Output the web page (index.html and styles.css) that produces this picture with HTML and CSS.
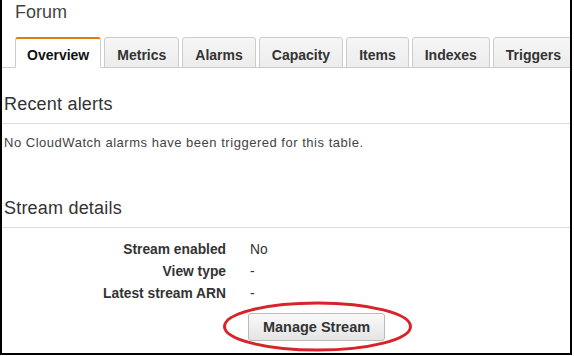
FILE: index.html
```html
<!DOCTYPE html>
<html lang="en">
<head>
    <meta charset="UTF-8">
    <meta name="viewport" content="width=device-width, initial-scale=1.0">
    <title>Forum</title>
    <link rel="stylesheet" href="styles.css">
</head>
<body>
    <div class="panel">
        <div class="table-name">Forum</div>
        <div class="tabs">
            <div class="tab active">Overview</div>
            <div class="tab">Metrics</div>
            <div class="tab">Alarms</div>
            <div class="tab">Capacity</div>
            <div class="tab">Items</div>
            <div class="tab">Indexes</div>
            <div class="tab">Triggers</div>
        </div>

        <div class="section-title">Recent alerts</div>
        <div class="message">No CloudWatch alarms have been triggered for this table.</div>

        <div class="section-title stream">Stream details</div>
        <div class="details">
            <div class="label">Stream enabled</div>
            <div class="value">No</div>
            <div class="label">View type</div>
            <div class="value">-</div>
            <div class="label">Latest stream ARN</div>
            <div class="value">-</div>
        </div>
        <div class="actions">
            <div class="button-wrap">
                <button class="button">Manage Stream</button>
                <!-- red highlight drawn around the button -->
                <svg class="highlight" viewBox="0 0 193 53" width="193" height="53">
                    <ellipse cx="96.5" cy="26.5" rx="93" ry="23.5" fill="none" stroke="#d8232a" stroke-width="3"/>
                </svg>
            </div>
        </div>
    </div>
</body>
</html>
```

FILE: styles.css
```css
html, body {
    margin: 0;
    background-color: #ffffff;
    font-family: "Liberation Sans", Arial, sans-serif;
    color: #444444;
}
.panel {
    width: 572px;
    height: 355px;
    box-sizing: border-box;
    padding-top: 2px;
    border: 2px solid #000000;
    border-top: 0;
    overflow: hidden;
}
.table-name {
    padding-left: 13px;
    font-size: 18px;
    line-height: 20px;
    color: #444444;
}
.tabs {
    display: flex;
    gap: 3px;
    margin-top: 15px;
    padding-left: 13px;
    border-bottom: 1px solid #cccccc;
}
.tab {
    margin-bottom: -1px;
    padding: 9px 12px 4px;
    line-height: 16px;
    font-size: 14px;
    font-weight: bold;
    color: #333333;
    background: linear-gradient(#f6f6f6, #ececec);
    border: 1px solid #cccccc;
    border-radius: 3px 3px 0 0;
}
.tab.active {
    padding: 8px 11px 4px;
    color: #111111;
    background: #ffffff;
    border-top: 2px solid #e47911;
    border-bottom-color: #ffffff;
}
.section-title {
    margin-top: 25px;
    padding-left: 2px;
    padding-bottom: 8px;
    font-size: 18px;
    line-height: 22px;
    letter-spacing: 0.2px;
    color: #333333;
    border-bottom: 1px solid #dddddd;
}
.section-title.stream {
    margin-top: 45px;
}
.message {
    margin-top: 10px;
    padding-left: 2px;
    font-size: 13px;
    line-height: 18px;
    letter-spacing: 0.52px;
}
.details {
    display: grid;
    grid-template-columns: 224px auto;
    column-gap: 24px;
    margin-top: 11px;
    font-size: 13.8px;
    line-height: 22px;
}
.details .label {
    text-align: right;
    font-weight: bold;
    color: #333333;
}
.details .value {
    color: #333333;
}
.actions {
    margin-top: 8px;
    padding-left: 246px;
}
.button-wrap {
    position: relative;
    display: inline-block;
}
.button {
    display: block;
    width: 137px;
    height: 28px;
    padding: 0;
    font-family: "Liberation Sans", Arial, sans-serif;
    font-size: 14.5px;
    font-weight: bold;
    color: #333333;
    background: linear-gradient(#fafafa, #e4e4e4);
    border: 1px solid #bbbbbb;
    border-radius: 3px;
}
.highlight {
    position: absolute;
    left: -27px;
    top: -13px;
}
```
